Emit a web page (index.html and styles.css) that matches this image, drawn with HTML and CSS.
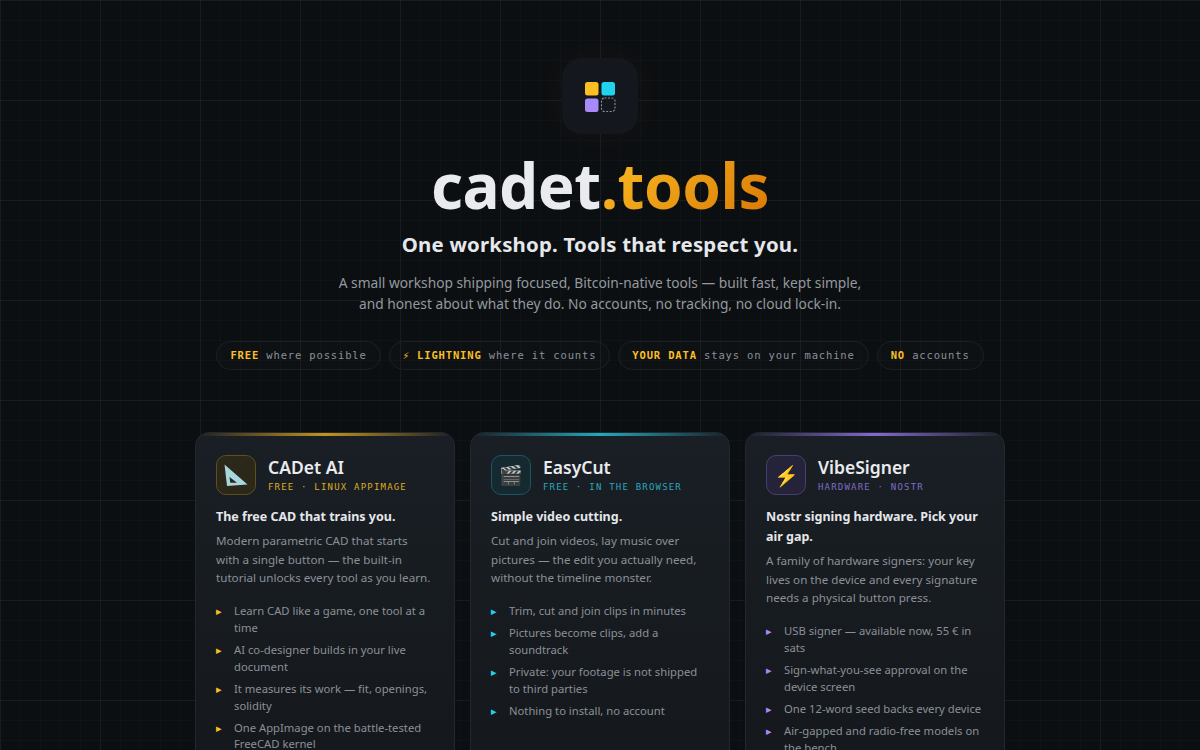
FILE: index.html
```html
<!DOCTYPE html>
<html lang="en">
<head>
  <meta charset="UTF-8">
  <title>cadet.tools</title>
  <link rel="stylesheet" href="styles.css">
</head>
<body>

  <header class="hero">
    <div class="logo">
      <svg width="32" height="32" viewBox="0 0 32 32">
        <rect x="1" y="2" width="13.5" height="13.5" rx="2.5" fill="#fbbf24"/>
        <rect x="17.5" y="2" width="13.5" height="13.5" rx="2.5" fill="#22d3ee"/>
        <rect x="1" y="18.5" width="13.5" height="13.5" rx="2.5" fill="#a78bfa"/>
        <rect x="17.5" y="18" width="13.5" height="13.5" rx="3" fill="none" stroke="#8a8e95" stroke-width="1.1" stroke-dasharray="2 1.5"/>
      </svg>
    </div>
    <h1 class="title">cadet<span class="title-accent">.tools</span></h1>
    <div class="subtitle">One workshop. Tools that respect you.</div>
    <p class="intro">A small workshop shipping focused, Bitcoin-native tools — built fast, kept simple,<br>and honest about what they do. No accounts, no tracking, no cloud lock-in.</p>
    <div class="pills">
      <span class="pill"><b>FREE</b> where possible</span>
      <span class="pill"><b>⚡ LIGHTNING</b> where it counts</span>
      <span class="pill"><b>YOUR DATA</b> stays on your machine</span>
      <span class="pill"><b>NO</b> accounts</span>
    </div>
  </header>

  <main class="cards">
    <section class="card amber">
      <div class="card-head">
        <div class="card-icon">
          <svg width="40" height="40" viewBox="0 0 40 40">
            <path fill-rule="evenodd" fill="#a9d6dc" d="M8.5 9.5 L31.5 29.5 L11 31 Z M13.5 22 L21 27.7 L14.3 27.7 Z"/>
          </svg>
        </div>
        <div>
          <div class="card-name">CADet AI</div>
          <div class="card-tag">FREE · LINUX APPIMAGE</div>
        </div>
      </div>
      <div class="card-lede">The free CAD that trains you.</div>
      <p class="card-text">Modern parametric CAD that starts with a single button — the built-in tutorial unlocks every tool as you learn.</p>
      <ul class="card-list">
        <li>Learn CAD like a game, one tool at a time</li>
        <li>AI co-designer builds in your live document</li>
        <li>It measures its work — fit, openings, solidity</li>
        <li>One AppImage on the battle-tested FreeCAD kernel</li>
      </ul>
    </section>

    <section class="card cyan">
      <div class="card-head">
        <div class="card-icon"><span class="clapper">🎬</span></div>
        <div>
          <div class="card-name">EasyCut</div>
          <div class="card-tag">FREE · IN THE BROWSER</div>
        </div>
      </div>
      <div class="card-lede">Simple video cutting.</div>
      <p class="card-text">Cut and join videos, lay music over pictures — the edit you actually need, without the timeline monster.</p>
      <ul class="card-list">
        <li>Trim, cut and join clips in minutes</li>
        <li>Pictures become clips, add a soundtrack</li>
        <li>Private: your footage is not shipped to third parties</li>
        <li>Nothing to install, no account</li>
      </ul>
    </section>

    <section class="card violet">
      <div class="card-head">
        <div class="card-icon">⚡</div>
        <div>
          <div class="card-name">VibeSigner</div>
          <div class="card-tag">HARDWARE · NOSTR</div>
        </div>
      </div>
      <div class="card-lede">Nostr signing hardware. Pick your air gap.</div>
      <p class="card-text">A family of hardware signers: your key lives on the device and every signature needs a physical button press.</p>
      <ul class="card-list">
        <li>USB signer — available now, 55 € in sats</li>
        <li>Sign-what-you-see approval on the device screen</li>
        <li>One 12-word seed backs every device</li>
        <li>Air-gapped and radio-free models on the bench</li>
      </ul>
    </section>
  </main>

</body>
</html>
```

FILE: styles.css
```css
* {
  box-sizing: border-box;
}

html {
  background: #0c0f12;
}

body {
  margin: 0;
  font-family: "Noto Sans", sans-serif;
  color: #e5e7eb;
  background-color: #0c0f12;
  background-image:
    linear-gradient(rgba(255,255,255,0.04) 1px, transparent 1px),
    linear-gradient(90deg, rgba(255,255,255,0.04) 1px, transparent 1px),
    linear-gradient(rgba(255,255,255,0.014) 1px, transparent 1px),
    linear-gradient(90deg, rgba(255,255,255,0.014) 1px, transparent 1px);
  background-size: 100px 100px, 100px 100px, 20px 20px, 20px 20px;
}

.hero {
  display: flex;
  flex-direction: column;
  align-items: center;
  padding-top: 58px;
  text-align: center;
}

.logo {
  width: 76px;
  height: 76px;
  border-radius: 20px;
  background: #14171e;
  display: flex;
  align-items: center;
  justify-content: center;
  box-shadow: 0 0 40px rgba(251,191,36,0.04);
}

.title {
  margin: 12px 0 0;
  font-size: 62px;
  line-height: 78px;
  font-weight: 700;
  letter-spacing: -0.5px;
  color: #e9ebef;
}

.title-accent {
  background: linear-gradient(135deg, #fbbf24, #d97706);
  -webkit-background-clip: text;
  background-clip: text;
  color: transparent;
}

.subtitle {
  margin-top: 5px;
  font-size: 20.4px;
  line-height: 30px;
  font-weight: 700;
  letter-spacing: 0.2px;
  color: #e5e7eb;
}

.intro {
  margin: 13px 0 0;
  font-size: 13.75px;
  line-height: 21px;
  color: #94999f;
}

.pills {
  display: flex;
  justify-content: center;
  gap: 8px;
  margin-top: 27px;
}

.pill {
  height: 29px;
  padding: 0 13px;
  border: 1px solid #1c2026;
  border-radius: 15px;
  background: rgba(255,255,255,0.012);
  font-family: "DejaVu Sans Mono", monospace;
  font-size: 10.5px;
  line-height: 26px;
  letter-spacing: 0.85px;
  color: #8b9098;
  white-space: nowrap;
}

.pill b {
  color: #fbbf24;
  font-weight: 700;
}

.cards {
  display: grid;
  grid-template-columns: repeat(3, 260px);
  gap: 15px;
  justify-content: center;
  margin-top: 62px;
  padding-bottom: 40px;
}

.card {
  position: relative;
  padding: 22px 20px 24px;
  border: 1px solid #24282e;
  border-radius: 14px;
  background: linear-gradient(180deg, #1a1f25, #14181c);
  overflow: hidden;
}

.card::before {
  content: "";
  position: absolute;
  top: 0;
  left: 0;
  right: 0;
  height: 3px;
  background: linear-gradient(90deg, transparent, var(--accent), transparent);
}

.amber { --accent: #c4931e; --tag: #dcab22; --bullet: #fbbf24; --icon-bg: #2b2719; --icon-line: #5f4f1f; }
.cyan { --accent: #22a9be; --tag: #2aa7bb; --bullet: #22d3ee; --icon-bg: #142a30; --icon-line: #1d5560; }
.violet { --accent: #8369d1; --tag: #7f6cc6; --bullet: #a78bfa; --icon-bg: #25233a; --icon-line: #464070; }

.card-head {
  display: flex;
  align-items: center;
  gap: 12px;
}

.card-icon {
  width: 40px;
  height: 40px;
  flex: none;
  display: flex;
  align-items: center;
  justify-content: center;
  border: 1px solid var(--icon-line);
  border-radius: 10px;
  background: var(--icon-bg);
  font-size: 20px;
}

.card-icon svg {
  flex: none;
}

.clapper {
  font-size: 19px;
  filter: saturate(0.5) opacity(0.85);
}

.card-name {
  font-size: 17.5px;
  line-height: 22px;
  font-weight: 600;
  color: #e9ebef;
}

.card-tag {
  margin-top: 3px;
  font-family: "DejaVu Sans Mono", monospace;
  font-size: 9px;
  line-height: 13px;
  letter-spacing: 1.2px;
  color: var(--tag);
}

.card-lede {
  margin-top: 12px;
  font-size: 12.5px;
  line-height: 20px;
  font-weight: 700;
  color: #e5e7eb;
}

.card-text {
  margin: 5px 0 0;
  font-size: 11.65px;
  line-height: 18.7px;
  color: #8b9097;
}

.card-list {
  list-style: none;
  margin: 15px 0 0;
  padding: 0;
}

.card-list li {
  position: relative;
  padding-left: 18px;
  margin-bottom: 5px;
  font-size: 11.25px;
  line-height: 16.9px;
  color: #8b9097;
}

.card-list li::before {
  content: "▸";
  position: absolute;
  left: 0;
  top: 0;
  font-size: 11px;
  color: var(--bullet);
}
```
